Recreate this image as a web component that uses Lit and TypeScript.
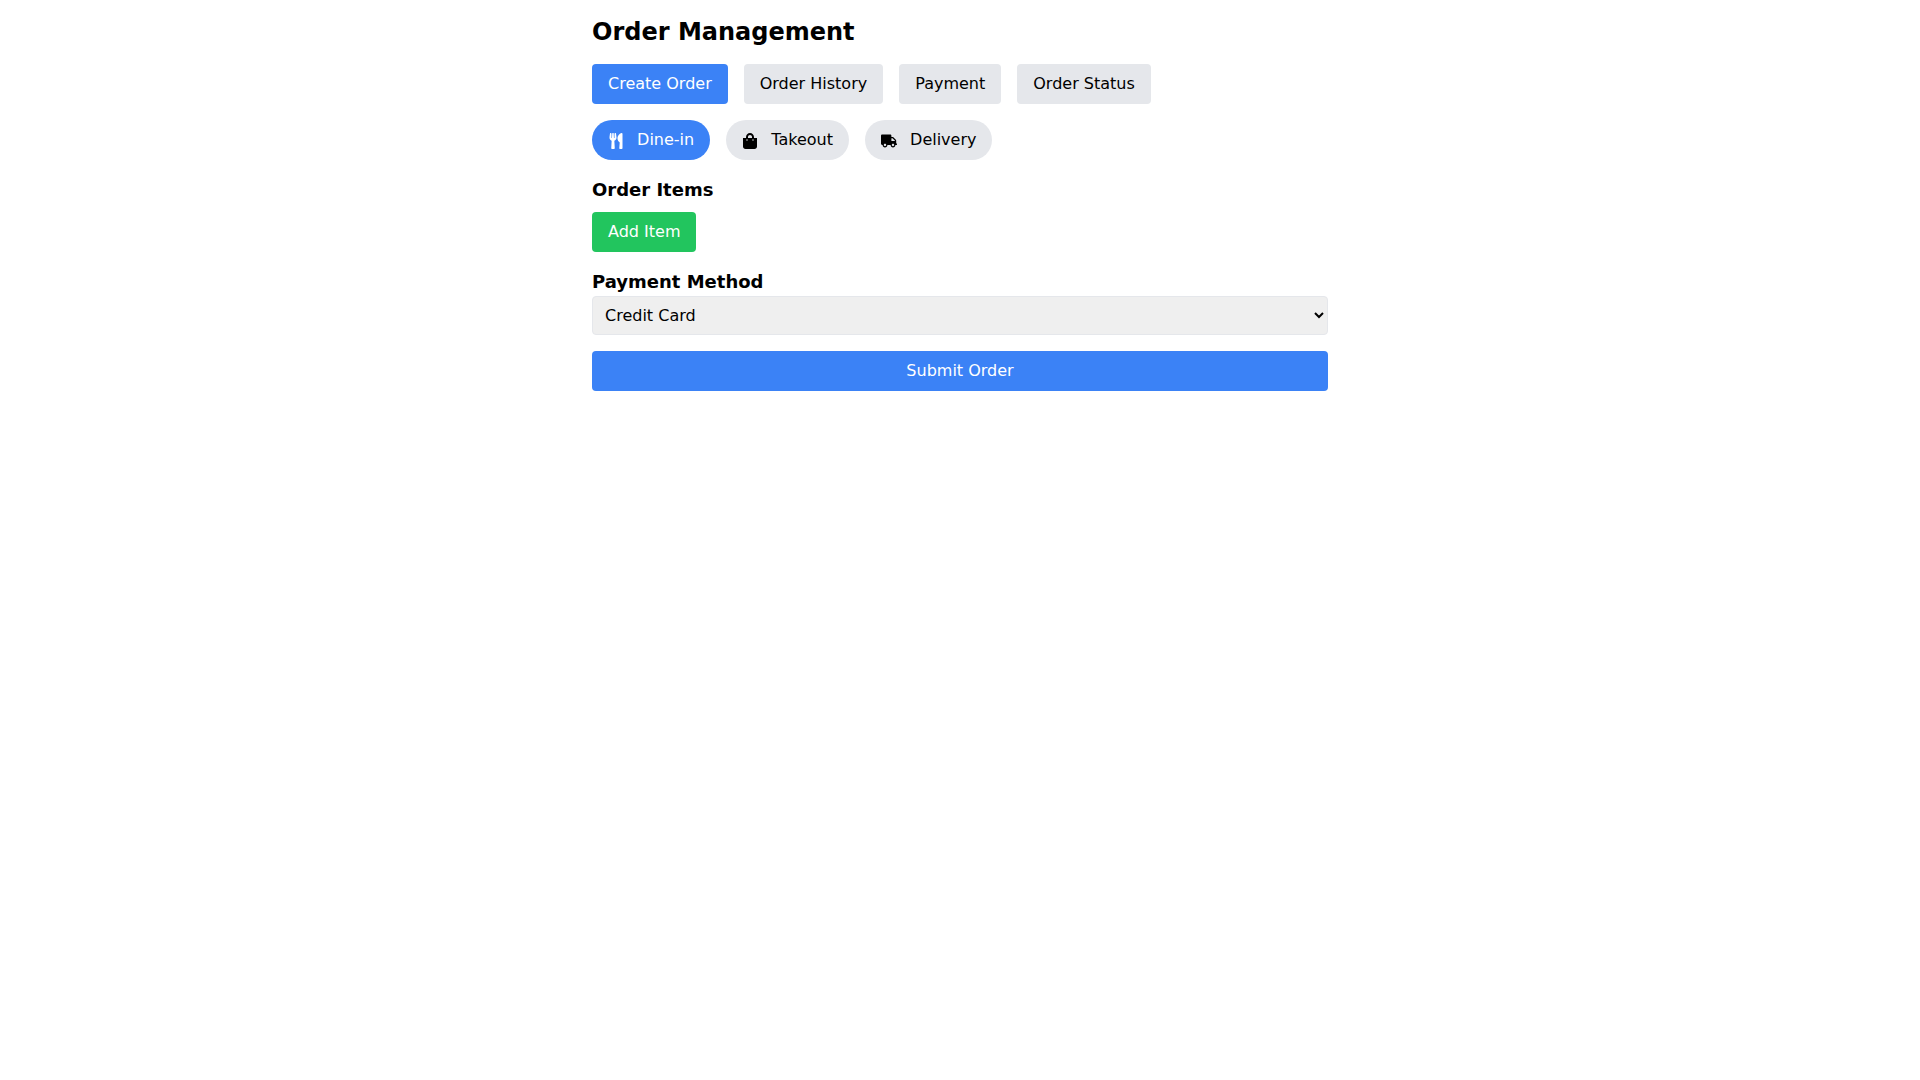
import { LitElement, html, css, svg } from "lit";
import { customElement } from "lit/decorators.js";

const icon = (vb: string, d: string) =>
  html`<svg class="icon" viewBox=${vb} aria-hidden="true">${svg`<path fill="currentColor" d=${d}></path>`}</svg>`;

const UTENSILS = "M207.9 15.2c.8 4.7 16.1 94.5 16.1 128.8 0 52.3-27.8 89.6-68.9 104.6L168 486.7c.7 13.7-10.2 25.3-24 25.3H80c-13.7 0-24.7-11.5-24-25.3l12.9-238.1C27.7 233.6 0 196.2 0 144 0 109.6 15.3 19.9 16.1 15.2 19.3-5.1 61.4-5.4 64 16.3v141.2c1.3 3.4 15.1 3.2 16 0 1.4-25.3 7.9-139.2 8-141.8 3.3-20.8 44.7-20.8 47.9 0 .2 2.7 6.6 116.5 8 141.8.9 3.2 14.8 3.4 16 0V16.3c2.6-21.6 44.8-21.4 48-1.1zm119.2 285.7l-15 185.1c-1.2 14 9.9 26 23.9 26h56c13.3 0 24-10.7 24-24V24c0-13.2-10.7-24-24-24-82.5 0-221.4 178.5-64.9 300.9z";
const BAG = "M352 160v-32C352 57.42 294.579 0 224 0 153.42 0 96 57.42 96 128v32H0v272c0 44.183 35.817 80 80 80h288c44.183 0 80-35.817 80-80V160h-96zm-192-32c0-35.29 28.71-64 64-64s64 28.71 64 64v32H160v-32zm160 120c-13.255 0-24-10.745-24-24s10.745-24 24-24 24 10.745 24 24-10.745 24-24 24zm-192 0c-13.255 0-24-10.745-24-24s10.745-24 24-24 24 10.745 24 24-10.745 24-24 24z";
const TRUCK = "M624 352h-16V243.9c0-12.7-5.1-24.9-14.1-33.9L494 110.1c-9-9-21.2-14.1-33.9-14.1H416V48c0-26.5-21.5-48-48-48H48C21.5 0 0 21.5 0 48v320c0 26.5 21.5 48 48 48h16c0 53 43 96 96 96s96-43 96-96h128c0 53 43 96 96 96s96-43 96-96h48c8.8 0 16-7.2 16-16v-32c0-8.8-7.2-16-16-16zM160 464c-26.5 0-48-21.5-48-48s21.5-48 48-48 48 21.5 48 48-21.5 48-48 48zm320 0c-26.5 0-48-21.5-48-48s21.5-48 48-48 48 21.5 48 48-21.5 48-48 48zm80-208H416V144h44.1l99.9 99.9V256z";

@customElement("app-root")
export class AppRoot extends LitElement {
  static styles = css`
    :host {
      display: block;
      font-family: "DejaVu Sans", sans-serif;
      font-size: 16px;
      line-height: 24px;
      color: #000;
      background: #fff;
    }
    * { box-sizing: border-box; }
    .container { width: 768px; margin: 0 auto; padding: 16px; }
    h1 { margin: 0 0 16px; font-size: 24px; line-height: 32px; font-weight: 700; }
    h2 { margin: 0 0 8px; font-size: 18px; line-height: 28px; font-weight: 700; }
    .row { display: flex; gap: 16px; margin-bottom: 16px; }
    button {
      font: inherit;
      color: #000;
      background: #e5e7eb;
      border: 0;
      margin: 0;
      padding: 8px 16px;
      border-radius: 4px;
      cursor: pointer;
    }
    button.pill { border-radius: 9999px; }
    button.blue { background: #3b82f6; color: #fff; }
    button.green { background: #22c55e; color: #fff; }
    button.full { display: block; width: 100%; }
    .icon {
      display: inline-block;
      width: 16px;
      height: 16px;
      margin-right: 8px;
      vertical-align: middle;
      overflow: visible;
    }
    .items { margin-bottom: 16px; }
    .field { margin-bottom: 16px; }
    label { display: block; font-size: 18px; line-height: 28px; font-weight: 700; }
    select {
      display: block;
      width: 100%;
      height: 39px;
      padding: 8px;
      font: inherit;
      color: #000;
      background-color: #efefef;
      border: 1px solid #e5e7eb;
      border-radius: 4px;
    }
  `;

  render() {
    return html`
      <div class="container">
        <h1>Order Management</h1>
        <div class="row">
          <button class="blue">Create Order</button>
          <button>Order History</button>
          <button>Payment</button>
          <button>Order Status</button>
        </div>
        <div class="row">
          <button class="pill blue">${icon("0 0 416 512", UTENSILS)} Dine-in</button>
          <button class="pill">${icon("0 0 448 512", BAG)} Takeout</button>
          <button class="pill">${icon("0 0 640 512", TRUCK)} Delivery</button>
        </div>
        <div class="items">
          <h2>Order Items</h2>
          <button class="green">Add Item</button>
        </div>
        <div class="field">
          <label for="pm">Payment Method</label>
          <select id="pm">
            <option>Credit Card</option>
            <option>Cash</option>
            <option>Mobile Payment</option>
          </select>
        </div>
        <button class="blue full">Submit Order</button>
      </div>
    `;
  }
}
